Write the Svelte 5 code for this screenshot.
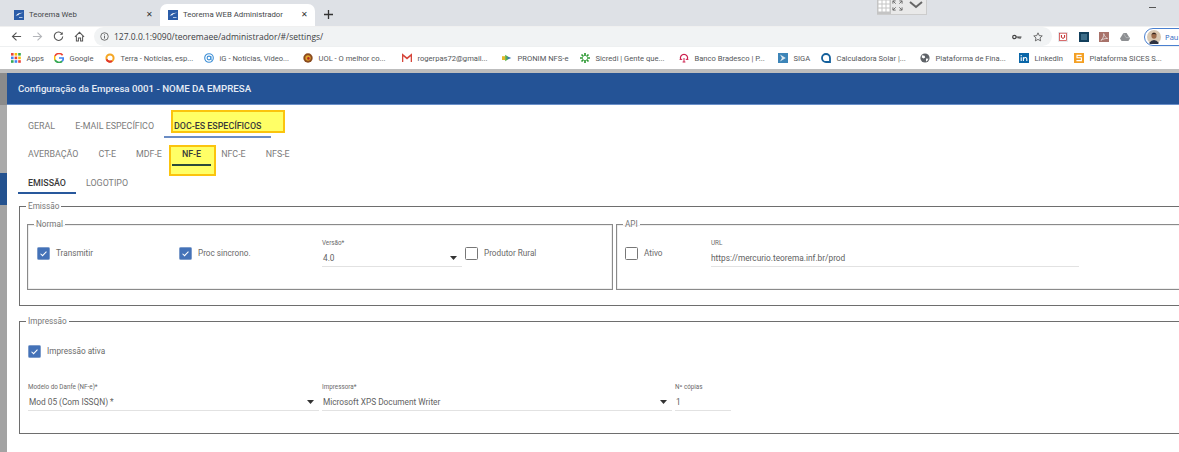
<script>
  const bookmarks = [
    { t: 'Apps', w: 43, i: 'apps' },
    { t: 'Google', w: 51, i: 'google' },
    { t: 'Terra - Notícias, esp...', w: 99, i: 'terra' },
    { t: 'iG - Notícias, Vídeo...', w: 99, i: 'ig' },
    { t: 'UOL - O melhor co...', w: 99, i: 'uol' },
    { t: 'rogerpas72@gmail...', w: 100, i: 'gmail' },
    { t: 'PRONIM NFS-e', w: 78, i: 'pronim' },
    { t: 'Sicredi | Gente que...', w: 99, i: 'sicredi' },
    { t: 'Banco Bradesco | P...', w: 99, i: 'bradesco' },
    { t: 'SIGA', w: 43, i: 'siga' },
    { t: 'Calculadora Solar |...', w: 99, i: 'calc' },
    { t: 'Plataforma de Fina...', w: 99, i: 'globe' },
    { t: 'LinkedIn', w: 55, i: 'in' },
    { t: 'Plataforma SICES S...', w: 99, i: 'sices' }
  ];
  const appDots = ['#ea4335','#fbbc05','#34a853','#4285f4','#ea4335','#fbbc05','#34a853','#4285f4','#ea4335'];
</script>

{#snippet favicon()}
  <svg class="fav" viewBox="0 0 10 10"><rect width="10" height="10" fill="#2a5ca8"/><path d="M1.5 6.2C3 3.6 5.6 2.6 9 2.8 6.4 3.4 5 4 4 5.4 3.4 5 2.4 5.4 1.5 6.2z" fill="#fff"/><path d="M5 7.5h3.5" stroke="#cfe0f5" stroke-width=".8"/></svg>
{/snippet}

{#snippet check(on)}
  <span class="cb" class:on>
    {#if on}<svg viewBox="0 0 13 13"><path d="M3 6.8l2.4 2.3L10 4.2" fill="none" stroke="#fff" stroke-width="1.2"/></svg>{/if}
  </span>
{/snippet}

{#snippet arrow()}
  <svg class="arrow" viewBox="0 0 7 4"><path d="M0 0h7L3.5 4z" fill="#333"/></svg>
{/snippet}

{#snippet bmIcon(i)}
  <svg class="bmi" viewBox="0 0 10 10">
    {#if i === 'apps'}
      {#each appDots as c, n}<rect x={(n % 3) * 3.6} y={Math.floor(n / 3) * 3.6} width="2.6" height="2.6" fill={c}/>{/each}
    {:else if i === 'google'}
      <path d="M8.6 2.2A4.5 4.5 0 0 0 1 3" fill="none" stroke="#ea4335" stroke-width="1.7"/><path d="M1 3a4.5 4.5 0 0 0 0 4" fill="none" stroke="#fbbc05" stroke-width="1.7"/><path d="M1 7a4.5 4.5 0 0 0 7.2 1.2" fill="none" stroke="#34a853" stroke-width="1.7"/><path d="M5 5h4.3a4.5 4.5 0 0 1-1.1 3.2" fill="none" stroke="#4285f4" stroke-width="1.7"/>
    {:else if i === 'terra'}
      <circle cx="5" cy="5" r="3.6" fill="#fff" stroke="#f5a623" stroke-width="2"/><path d="M1.6 6.4A3.6 3.6 0 0 0 7 8" fill="none" stroke="#e2342b" stroke-width="2"/>
    {:else if i === 'ig'}
      <circle cx="5" cy="5" r="4.3" fill="none" stroke="#3d8fd6" stroke-width="1.1"/><circle cx="5" cy="5" r="1.9" fill="none" stroke="#3d8fd6" stroke-width="1.1"/><path d="M6.9 3v3.4q0 1 1.5.6" fill="none" stroke="#3d8fd6" stroke-width="1"/>
    {:else if i === 'uol'}
      <circle cx="5" cy="5" r="4.7" fill="#8a4a1e"/><circle cx="5" cy="5" r="2.7" fill="#e2a52c"/><circle cx="5.4" cy="5.4" r="1.3" fill="#b3291f"/>
    {:else if i === 'gmail'}
      <path d="M.5 9V1.6L5 5.4l4.5-3.8V9" fill="none" stroke="#d6453a" stroke-width="1.6"/>
    {:else if i === 'pronim'}
      <path d="M0 3.2h3.4V7H0z" fill="#e3b82a"/><path d="M3.2 1.8L8 5 3.2 8.2z" fill="#5cb04a"/><path d="M5.4 3.6L9.4 5 5.4 6.4z" fill="#3a79b8"/>
    {:else if i === 'sicredi'}
      <g stroke="#2f9a35" stroke-width="1.7"><path d="M5 0v3M5 7v3M0 5h3M7 5h3M1.5 1.5l2 2M6.5 6.5l2 2M8.5 1.5l-2 2M3.5 6.5l-2 2"/></g>
    {:else if i === 'bradesco'}
      <path d="M1.6 6.2a3.6 3.6 0 1 1 6.8 0" fill="none" stroke="#cc1f4d" stroke-width="1.2"/><path d="M.6 6.4h2.6M6.8 6.4h2.6M5 5v4M3.6 9h2.8" stroke="#cc1f4d" stroke-width="1" fill="none"/>
    {:else if i === 'siga'}
      <rect width="10" height="10" fill="#3d85b8"/><path d="M2 1.4L7.8 5 2 8.6 4 5z" fill="#dbe7ef"/>
    {:else if i === 'calc'}
      <path d="M9 9H5a4 4 0 1 1 4-4z" fill="none" stroke="#14609c" stroke-width="1.8"/>
    {:else if i === 'globe'}
      <circle cx="5" cy="5" r="4.6" fill="#5f6368"/><path d="M2 2.2l2.6.6.6 1.8-1.6 1-1.8-1zM6 5.6l2.6.2-1.8 2.6-.8-.4z" fill="#fff"/>
    {:else if i === 'in'}
      <rect width="10" height="10" fill="#0a66a8"/><path d="M2.2 4.2v3.8M2.2 2v1.2M4.4 8V4.2M4.4 5.6q2.8-2.4 3.4.2V8" stroke="#fff" stroke-width="1.1" fill="none"/>
    {:else}
      <rect width="10" height="10" fill="#f4a024"/><path d="M7.6 2.4H3v2.4h4.4v2.8H2.4" fill="none" stroke="#fff" stroke-width="1.1"/>
    {/if}
  </svg>
{/snippet}

<div class="window">
  <div class="strip">
    <div class="tab">
      {@render favicon()}
      <span class="tab-title">Teorema Web</span>
      <span class="close">✕</span>
    </div>
    <div class="tab active">
      {@render favicon()}
      <span class="tab-title">Teorema WEB Administrador</span>
      <span class="close">✕</span>
    </div>
    <svg class="plus" viewBox="0 0 9 9"><path d="M4.5 0v9M0 4.5h9" stroke="#333" stroke-width="1.3"/></svg>
    <span class="spacer"></span>
    <div class="remote">
      <svg class="rg" viewBox="0 0 12 12" fill="#fff">
        {#each [0,1,2] as y}{#each [0,1,2] as x}<rect x={x * 4 + .5} y={y * 4 + .5} width="3" height="3"/>{/each}{/each}
      </svg>
      <svg class="rf" viewBox="0 0 12 12"><path d="M1 4V1h3M8 1h3v3M1 8v3h3M11 8v3H8M1 1l3 3M11 1L8 4M1 11l3-3M11 11L8 8" fill="none" stroke="#666" stroke-width="1"/></svg>
      <svg class="rc" viewBox="0 0 14 8"><path d="M1 1l6 5 6-5" fill="none" stroke="#666" stroke-width="2"/></svg>
    </div>
    <span class="min"></span>
  </div>

  <div class="toolbar">
    <svg class="nav" viewBox="0 0 12 12"><path d="M11 6H2M6 1.8L1.6 6 6 10.2" fill="none" stroke="#555" stroke-width="1.2"/></svg>
    <svg class="nav" viewBox="0 0 12 12"><path d="M1 6h9M6 1.8L10.4 6 6 10.2" fill="none" stroke="#b4b6ba" stroke-width="1.2"/></svg>
    <svg class="nav" viewBox="0 0 12 12"><path d="M10 3.4A4.6 4.6 0 1 0 10.6 6" fill="none" stroke="#555" stroke-width="1.2"/><path d="M10.6 1v3.2H7.4z" fill="#555"/></svg>
    <svg class="nav" viewBox="0 0 12 12"><path d="M1 6.4L6 1.4l5 5M2.6 5.6V11h2.2V7.6h2.4V11h2.2V5.6" fill="none" stroke="#555" stroke-width="1.1"/></svg>
    <div class="omni">
      <svg class="info" viewBox="0 0 10 10"><circle cx="5" cy="5" r="4.2" fill="none" stroke="#555" stroke-width=".9"/><path d="M5 4.3v3M5 2.6v1" stroke="#555" stroke-width="1"/></svg>
      <span class="url">127.0.0.1:9090/teoremaee/administrador/#/settings/</span>
      <span class="spacer"></span>
      <svg class="key" viewBox="0 0 10 6"><circle cx="2.4" cy="3" r="1.7" fill="none" stroke="#444" stroke-width="1.2"/><path d="M4 3h5.5M8 3v2M6.2 3v1.6" stroke="#444" stroke-width="1.1"/></svg>
      <svg class="star" viewBox="0 0 12 12"><path d="M6 1l1.5 3.3 3.6.4-2.7 2.4.8 3.6L6 8.9l-3.2 1.8.8-3.6L.9 4.7l3.6-.4z" fill="none" stroke="#555" stroke-width="1"/></svg>
    </div>
    <div class="exts">
      <svg class="ext" viewBox="0 0 10 10"><rect width="10" height="10" fill="#e6e9ec"/><rect x="1.5" y="1.2" width="7" height="7.4" fill="#fff" stroke="#c33" stroke-width=".7"/><path d="M3.4 3v2.4q1.6 2 3.2 0V3" fill="none" stroke="#b22" stroke-width="1"/></svg>
      <svg class="ext" viewBox="0 0 10 10"><rect width="10" height="10" fill="#123f5c"/><path d="M2 3h6M2 5h6M2 7h6" stroke="#8fc3dc" stroke-width=".7"/></svg>
      <svg class="ext" viewBox="0 0 10 10"><rect width="10" height="10" fill="#a8726a"/><path d="M2 8.4C4 6.5 5 4 4.7 1.6 5.6 4.4 7 6 8.6 6.4 6 6.4 3.8 7 2 8.4z" fill="none" stroke="#eee" stroke-width=".7"/></svg>
      <svg class="ext" viewBox="0 0 10 10"><path d="M3.4 1h3.2L10 6.6 8.4 9H1.6L0 6.6z" fill="#8d8f92"/><path d="M3.4 1L6 5.6H10" fill="none" stroke="#b5b7ba" stroke-width=".8"/></svg>
    </div>
    <span class="sep"></span>
    <div class="profile">
      <svg class="avatar" viewBox="0 0 14 14"><circle cx="7" cy="7" r="7" fill="#d9c8b2"/><ellipse cx="7" cy="5.6" rx="2.6" ry="3.2" fill="#9c6b4a"/><path d="M4.4 4.4Q7 1.2 9.6 4.4 7 3.4 4.4 4.4z" fill="#2d2420"/><path d="M2 13q5-6 10 0a7 7 0 0 1-10 0z" fill="#2e3240"/></svg>
      <span class="who">Pau</span>
    </div>
  </div>

  <div class="bookmarks">
    {#each bookmarks as b}
      <div class="bm" style="width:{b.w}px">
        {@render bmIcon(b.i)}
        <span>{b.t}</span>
      </div>
    {/each}
  </div>
  <div class="band"></div>

  <div class="page">
    <div class="gutter"></div>
    <div class="panel">
      <header class="head">Configuração da Empresa 0001 - NOME DA EMPRESA</header>
      <div class="body">
        <nav class="tabs t1">
          <span class="t">GERAL</span>
          <span class="t">E-MAIL ESPECÍFICO</span>
          <span class="t sel">
            <span class="mark m1"></span>
            <b>DOC-ES ESPECÍFICOS</b>
            <i class="line l1"></i>
          </span>
        </nav>
        <nav class="tabs t2">
          <span class="t">AVERBAÇÃO</span>
          <span class="t">CT-E</span>
          <span class="t">MDF-E</span>
          <span class="t sel">
            <span class="mark m2"></span>
            <b>NF-E</b>
            <i class="line l2"></i>
          </span>
          <span class="t">NFC-E</span>
          <span class="t">NFS-E</span>
        </nav>
        <nav class="tabs t3">
          <span class="t sel"><b>EMISSÃO</b><i class="line l3"></i></span>
          <span class="t">LOGOTIPO</span>
        </nav>

        <fieldset class="fs emissao">
          <legend>Emissão</legend>
          <div class="inner">
            <fieldset class="fs sub normal">
              <legend>Normal</legend>
              <div class="row">
                <label class="chk w142">{@render check(true)}<span>Transmitir</span></label>
                <label class="chk w143">{@render check(true)}<span>Proc sincrono.</span></label>
                <div class="field versao">
                  <small>Versão*</small>
                  <div class="val"><span>4.0</span>{@render arrow()}</div>
                </div>
                <label class="chk">{@render check(false)}<span>Produtor Rural</span></label>
              </div>
            </fieldset>
            <fieldset class="fs sub api">
              <legend>API</legend>
              <div class="row tight">
                <label class="chk w86">{@render check(false)}<span>Ativo</span></label>
                <div class="field urlf">
                  <small>URL</small>
                  <div class="val"><span>https://mercurio.teorema.inf.br/prod</span></div>
                </div>
              </div>
            </fieldset>
          </div>
        </fieldset>

        <fieldset class="fs impressao">
          <legend>Impressão</legend>
          <label class="chk ativa">{@render check(true)}<span>Impressão ativa</span></label>
          <div class="fields">
            <div class="field danfe">
              <small>Modelo do Danfe (NF-e)*</small>
              <div class="val"><span>Mod 05 (Com ISSQN) *</span>{@render arrow()}</div>
            </div>
            <div class="field printer">
              <small>Impressora*</small>
              <div class="val"><span>Microsoft XPS Document Writer</span>{@render arrow()}</div>
            </div>
            <div class="field copies">
              <small>Nº cópias</small>
              <div class="val"><span>1</span></div>
            </div>
          </div>
        </fieldset>
      </div>
    </div>
  </div>
</div>

<style>
  :global(body) { margin: 0; overflow: hidden; background: #fff; }
  .window { width: 1179px; height: 452px; overflow: hidden; display: flex; flex-direction: column; font-family: Roboto, sans-serif; }
  .spacer { flex: 1; }

  .strip { height: 26px; flex: none; background: #dee1e6; display: flex; align-items: flex-end; position: relative; font-family: Roboto, sans-serif; font-size: 7.8px; color: #45474a; }
  .tab { width: 160px; height: 22px; box-sizing: border-box; padding: 0 6px 1px 14px; display: flex; align-items: center; gap: 5px; }
  .tab.active { width: 155px; background: #fff; border-radius: 7px 7px 0 0; padding-left: 8px; }
  .fav { width: 10px; height: 10px; flex: none; }
  .tab-title { flex: 1; white-space: nowrap; }
  .close { font-size: 8px; color: #333; width: 10px; text-align: center; }
  .plus { width: 9px; height: 9px; margin: 0 0 7px 9px; }
  .remote { position: absolute; left: 877px; top: 0; width: 50px; height: 15px; background: #e9e9e9; display: flex; align-items: flex-start; border-right: 1px solid #ccc; border-bottom: 1px solid #ccc; box-sizing: border-box; }
  .rg { width: 12px; height: 12px; background: #c4c4c4; padding: 0 1px 2px; }
  .rf { width: 11px; height: 11px; margin-left: 1px; }
  .rc { width: 14px; height: 8px; margin: 1px 0 0 6px; }
  .min { position: absolute; left: 1149px; top: 7px; width: 7px; height: 1px; background: #555; }

  .toolbar { height: 20px; flex: none; background: #fff; display: flex; align-items: center; padding-left: 11px; gap: 0; border-top: 1px solid #f0f0f0; box-sizing: border-box; }
  .nav { width: 11px; height: 11px; flex: none; margin-right: 10px; }
  .omni { width: 958px; height: 19px; margin-left: -1px; background: #f1f3f4; border-radius: 10px; display: flex; align-items: center; padding: 0 9px 0 6px; box-sizing: border-box; font-family: "Open Sans", sans-serif; font-size: 8.5px; color: #3c4043; flex: none; }
  .info { width: 9px; height: 9px; margin-right: 5px; }
  .key { width: 10px; height: 6px; margin-right: 11px; }
  .star { width: 10px; height: 10px; }
  .exts { display: flex; gap: 10.7px; margin-left: 6px; }
  .ext { width: 10px; height: 10px; }
  .sep { width: 1px; height: 11px; background: #c8c8c8; margin: 0 5px 0 9px; }
  .profile { height: 18px; width: 60px; flex: none; border: 1px solid #4a80d0; border-radius: 9px; display: flex; align-items: center; gap: 4px; box-sizing: border-box; font-family: "Open Sans", sans-serif; font-size: 7.6px; color: #2f66c0; }
  .avatar { width: 14px; height: 14px; margin-left: 2px; }

  .bookmarks { height: 23px; flex: none; background: #fff; display: flex; align-items: center; padding-left: 11px; font-family: Roboto, sans-serif; font-size: 7.6px; color: #54575a; white-space: nowrap; box-sizing: border-box; border-top: 1px solid #eef0f1; }
  .bm { flex: none; display: flex; align-items: center; gap: 5.5px; }
  .bmi { width: 10px; height: 10px; flex: none; }

  .band { height: 4px; flex: none; background: #bdbdbd; }
  .page { flex: 1; display: flex; min-height: 0; }
  .gutter { width: 7px; flex: none; background: linear-gradient(#8b8b8b 0 32px, #aaa 32px 100px, #24528f 100px 132px, #a3a3a3 132px); }
  .panel { flex: 1; min-width: 0; background: #fff; }
  .head { height: 32px; background: #245396; border-bottom: 1px solid #6a8fc8; box-sizing: border-box; color: #e6ecf5; font-size: 9.7px; font-weight: 500; display: flex; align-items: center; padding-left: 11px; }
  .body { width: 1300px; }

  .tabs { display: flex; padding-left: 11px; font-size: 8.9px; color: #7c7c7c; }
  .t1 { height: 33px; }
  .t2 { height: 29px; }
  .t3 { height: 28px; }
  .t { position: relative; padding: 0 10px; display: flex; align-items: flex-end; white-space: nowrap; }
  .t1 .t { padding-bottom: 7px; }
  .t2 .t { padding-bottom: 8px; }
  .t3 .t { padding-bottom: 7px; }
  .sel b { position: relative; font-weight: 500; color: #3a3a3a; }
  .line { position: absolute; bottom: 0; height: 2px; left: 0; right: 0; }
  .l1 { background: #6a8cc4; bottom: 0; }
  .l2 { background: #2b4a3a; bottom: 1px; }
  .l3 { background: #28589c; bottom: 1px; }
  .mark { position: absolute; background: #ffff66; border: 2px solid #fbc40e; box-sizing: border-box; }
  .m1 { left: 7px; top: 5px; width: 114px; height: 23px; }
  .m2 { left: -3px; top: 7px; width: 47px; height: 31px; }

  .fs { border: 1px solid #6e6e6e; margin: 0; padding: 0; min-width: 0; box-sizing: border-box; font-size: 8.2px; color: #6a6a6a; }
  legend { padding: 0 2px; margin-left: 6px; line-height: 11px; font-size: 8.2px; color: #777; }
  .emissao { margin: 6px 0 0 12px; height: 105px; width: 1280px; }
  .inner { display: flex; gap: 3px; padding: 7px 0 0 7px; }
  .sub { height: 71px; border-color: #8a8a8a; box-shadow: inset 0 0 0 .5px #ddd; }
  .normal { width: 586px; flex: none; }
  .api { flex: 1; }
  .row { display: flex; align-items: flex-start; padding: 9px 0 0 9px; }
  .row.tight { padding-left: 8px; }
  .chk { display: flex; align-items: center; gap: 6px; height: 14px; margin-top: 7px; color: #6a6a6a; white-space: nowrap; }
  .cb { width: 13px; height: 13px; box-sizing: border-box; border: 1px solid #777; border-radius: 1.5px; background: #fff; display: block; flex: none; }
  .cb.on { background: #4472b8; border-color: #7d9ccb; }
  .cb svg { display: block; width: 100%; height: 100%; }
  .w142 { width: 142px; }
  .w143 { width: 143px; }
  .w86 { width: 86px; }

  .field { display: flex; flex-direction: column; }
  .field small { font-size: 6.3px; line-height: 8px; color: #6a6a6a; height: 10px; white-space: nowrap; }
  .val { height: 17px; display: flex; align-items: center; justify-content: space-between; border-bottom: 1px solid #e2e2e2; padding: 0 5px 0 1px; font-size: 8.3px; color: #616161; box-sizing: content-box; white-space: nowrap; }
  .arrow { width: 7px; height: 4px; flex: none; }
  .versao { width: 140px; margin-right: 3px; }
  .urlf { width: 368px; }
  .urlf .val { padding-left: 0; }

  .impressao { margin: 10px 0 0 12px; height: 118px; width: 1280px; }
  .ativa { margin: 17px 0 0 8px; width: max-content; }
  .fields { display: flex; gap: 3px; padding: 25px 0 0 8px; }
  .danfe { width: 291px; }
  .printer { width: 350px; }
  .copies { width: 56px; }
</style>
